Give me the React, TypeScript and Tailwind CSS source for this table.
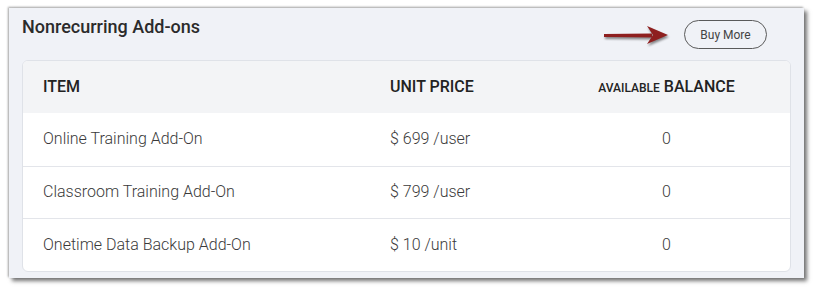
const rows = [
  { item: "Online Training Add-On", price: "$ 699 /user", balance: "0" },
  { item: "Classroom Training Add-On", price: "$ 799 /user", balance: "0" },
  { item: "Onetime Data Backup Add-On", price: "$ 10 /unit", balance: "0" },
];

function Arrow() {
  return (
    <svg width="70" height="22" viewBox="0 0 70 22" className="drop-shadow-[1px_2px_1px_rgba(0,0,0,0.45)]">
      <path d="M2 10 L50 9.5 L50 13.5 L2 13 Z" fill="#8e1f1f" />
      <path d="M45 2 L66 11 L45 20 L51 11 Z" fill="#8e1f1f" />
    </svg>
  );
}

export default function App() {
  return (
    <div className="min-h-[289px] w-[813px] bg-white pt-[8px] pl-[9px] font-['Roboto',sans-serif]">
      <div className="h-[270px] w-[795px] bg-[#f0f2f7] px-[13px] pt-[8px] shadow-[3px_3px_4px_rgba(0,0,0,0.55),-1px_-1px_2px_rgba(0,0,0,0.35)]">
        {/* Heading + action */}
        <div className="flex h-[44px] items-start">
          <h2 className="pt-[1px] text-[18px] leading-[20px] font-medium text-[#2b2b2b]">Nonrecurring Add-ons</h2>
          <div className="ml-auto mr-[24px] flex items-center gap-[12px] pt-[4px]">
            <Arrow />
            <button className="flex h-[29px] w-[83px] items-center justify-center rounded-full border border-[#5a5a5a] text-[12px] text-[#444]">
              Buy More
            </button>
          </div>
        </div>

        {/* Add-on table */}
        <div className="overflow-hidden rounded-[6px] border border-[#dfe2e8] bg-white">
          <div className="grid h-[52px] grid-cols-[347px_173px_1fr] items-center bg-[#f3f4f6] text-[16px] font-medium text-[#222]">
            <div className="pl-[20px]">ITEM</div>
            <div className="pl-[20px]">UNIT PRICE</div>
            <div className="text-center">
              <span className="text-[12px]">AVAILABLE</span> BALANCE
            </div>
          </div>
          {rows.map((r, i) => (
            <div
              key={r.item}
              className={`grid h-[52.5px] grid-cols-[347px_173px_1fr] items-center text-[16px] font-light text-[#3a3a3a] ${i > 0 ? "border-t border-[#e3e5ea]" : ""}`}
            >
              <div className="pl-[20px]">{r.item}</div>
              <div className="pl-[20px]">{r.price}</div>
              <div className="text-center">{r.balance}</div>
            </div>
          ))}
        </div>
      </div>
    </div>
  );
}
